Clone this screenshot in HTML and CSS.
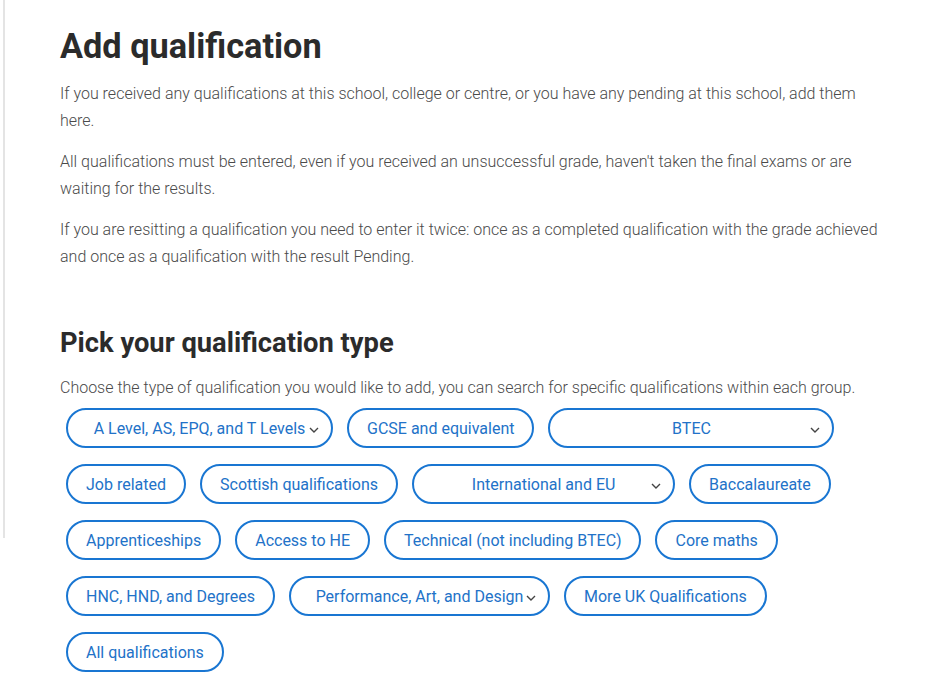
FILE: index.html
```html
<!DOCTYPE html>
<html lang="en">
<head>
<meta charset="utf-8">
<title>Add qualification</title>
<link rel="stylesheet" href="styles.css">
</head>
<body>
<div class="page">
  <div class="rule"></div>
  <main class="content">
    <h1 class="title">Add qualification</h1>
    <p class="para">If you received any qualifications at this school, college or centre, or you have any pending at this school, add them here.</p>
    <p class="para">All qualifications must be entered, even if you received an unsuccessful grade, haven't taken the final exams or are waiting for the results.</p>
    <p class="para">If you are resitting a qualification you need to enter it twice: once as a completed qualification with the grade achieved and once as a qualification with the result Pending.</p>

    <h2 class="subtitle">Pick your qualification type</h2>
    <p class="para desc">Choose the type of qualification you would like to add, you can search for specific qualifications within each group.</p>

    <div class="chips">
      <button class="chip select w-alevel">A Level, AS, EPQ, and T Levels<svg class="chev" viewBox="0 0 10 6"><path d="M1 1l4 4 4-4"/></svg></button>
      <button class="chip">GCSE and equivalent</button>
      <button class="chip select w-btec">BTEC<svg class="chev" viewBox="0 0 10 6"><path d="M1 1l4 4 4-4"/></svg></button>
      <button class="chip">Job related</button>
      <button class="chip">Scottish qualifications</button>
      <button class="chip select w-intl">International and EU<svg class="chev" viewBox="0 0 10 6"><path d="M1 1l4 4 4-4"/></svg></button>
      <button class="chip">Baccalaureate</button>
      <button class="chip">Apprenticeships</button>
      <button class="chip">Access to HE</button>
      <button class="chip">Technical (not including BTEC)</button>
      <button class="chip">Core maths</button>
      <button class="chip">HNC, HND, and Degrees</button>
      <button class="chip select w-perf">Performance, Art, and Design<svg class="chev" viewBox="0 0 10 6"><path d="M1 1l4 4 4-4"/></svg></button>
      <button class="chip">More UK Qualifications</button>
      <button class="chip">All qualifications</button>
    </div>
  </main>
</div>
</body>
</html>
```

FILE: styles.css
```css
* { box-sizing: border-box; }

html, body {
  margin: 0;
  padding: 0;
  background: #ffffff;
}

body {
  font-family: Roboto, "Liberation Sans", Arial, sans-serif;
  color: #505050;
}

.page {
  display: flex;
  align-items: flex-start;
}

.rule {
  flex: none;
  width: 2px;
  height: 538px;
  margin-left: 3px;
  background: #e4e4e4;
}

.content {
  width: 885px;
  padding-left: 55px;
  padding-top: 26px;
}

.title {
  margin: 0 0 14px;
  font-size: 34.3px;
  line-height: 40px;
  font-weight: 700;
  color: #2b2b2b;
}

.para {
  margin: 0 0 14px;
  font-size: 16px;
  line-height: 27px;
  font-weight: 300;
  color: #4a4a4a;
}

.subtitle {
  margin: 56px 0 14px;
  font-size: 27.3px;
  line-height: 34px;
  font-weight: 700;
  color: #2b2b2b;
}

.desc {
  margin-bottom: 7px;
}

.chips {
  display: flex;
  flex-wrap: wrap;
  gap: 16px 14px;
  padding-left: 6px;
}

.chip {
  position: relative;
  display: inline-flex;
  align-items: center;
  justify-content: center;
  height: 40px;
  padding: 0 18px;
  border: 2px solid #1976d2;
  border-radius: 20px;
  background: #ffffff;
  font-family: Roboto, "Liberation Sans", Arial, sans-serif;
  font-size: 16px;
  font-weight: 400;
  color: #2272c8;
  white-space: nowrap;
  cursor: pointer;
}

.chip.select { padding: 0 20px; }

.w-alevel { width: 267px; }
.w-btec { width: 286px; }
.w-intl { width: 263px; }
.w-perf { width: 261px; }

.chev {
  position: absolute;
  right: 12px;
  top: 17px;
  width: 10px;
  height: 6px;
  fill: none;
  stroke: #444444;
  stroke-width: 1.4;
}
```
